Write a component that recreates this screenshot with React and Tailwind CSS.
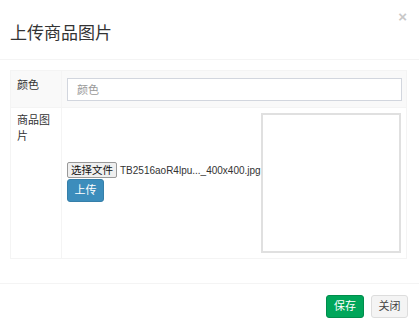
import React from 'react';

const font = { fontFamily: '"Liberation Sans", "Noto Sans CJK SC", sans-serif' };

export default function App() {
    return (
        <div className="w-[419px] h-[327px] bg-white text-[#333] overflow-hidden" style={font}>
            {/* header */}
            <div className="flex justify-between items-start h-[60px] pl-[10px] pr-[12px] border-b border-[#f4f4f4]">
                <h4 className="pt-[21px] text-[17px] leading-[26px] text-[#333]">上传商品图片</h4>
                <button className="mt-[9px] text-[15px] leading-[15px] text-[#c8c8c8] font-bold">×</button>
            </div>

            {/* body */}
            <div className="pt-[10px] pl-[10px] pr-[12px] h-[223px]">
                <table className="w-[397px] border border-[#f4f4f4] border-collapse text-[11px]">
                    <tbody>
                        <tr className="bg-[#f9f9f9] h-[36px]">
                            <td className="w-[51px] px-[6px] pt-[6px] align-top border border-[#f4f4f4] leading-[16px]">颜色</td>
                            <td className="pl-[5px] pr-[4px] pt-[7px] pb-[6px] border border-[#f4f4f4]">
                                <input
                                    type="text"
                                    placeholder="颜色"
                                    className="w-full h-[23px] px-[9px] border border-[#d2d6de] bg-white text-[11px] placeholder:text-[#999] outline-none"
                                    style={font}
                                />
                            </td>
                        </tr>
                        <tr className="bg-white">
                            <td className="w-[51px] px-[6px] pt-[4px] align-top border border-[#f4f4f4] leading-[16px]">商品图片</td>
                            <td className="pl-[5px] pr-[5px] py-[5px] border border-[#f4f4f4]">
                                <div className="flex items-center justify-between">
                                    <div className="flex flex-col items-start gap-[1px] mt-[-2px]">
                                        <div className="flex items-center gap-[3px]">
                                            <button className="w-[50px] h-[16px] bg-[#efefef] border border-[#999] rounded-[2px] text-[10.5px] leading-[14px] text-[#111] whitespace-nowrap">选择文件</button>
                                            <span className="text-[10px] text-[#333] whitespace-nowrap">TB2516aoR4lpu..._400x400.jpg</span>
                                        </div>
                                        <button className="w-[37px] h-[23px] bg-[#3c8dbc] border border-[#367fa9] rounded-[3px] text-white text-[11px]">上传</button>
                                    </div>
                                    <div className="w-[140px] h-[140px] border-2 border-[#e0e0e0] bg-white"></div>
                                </div>
                            </td>
                        </tr>
                    </tbody>
                </table>
            </div>

            {/* footer */}
            <div className="flex justify-end gap-[7px] pt-[11px] pr-[11px] border-t border-[#f4f4f4]">
                <button className="w-[38px] h-[23px] bg-[#00a65a] border border-[#008d4c] rounded-[3px] text-white text-[11px]">保存</button>
                <button className="w-[37px] h-[23px] bg-[#f4f4f4] border border-[#ddd] rounded-[3px] text-[#444] text-[11px]">关闭</button>
            </div>
        </div>
    );
}
